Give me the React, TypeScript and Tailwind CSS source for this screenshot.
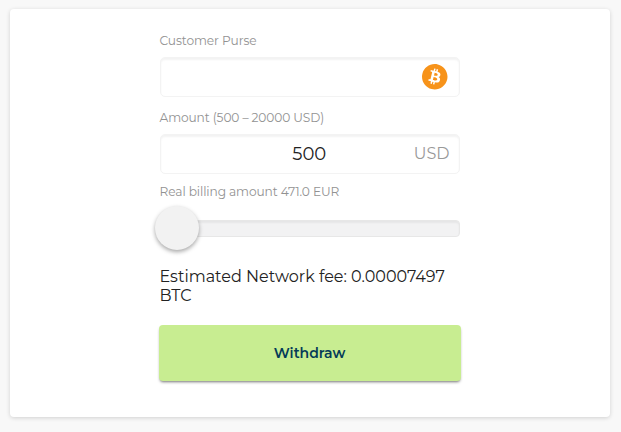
import { SiBitcoin } from "react-icons/si";

const label =
  "-ml-[0.5px] h-4 whitespace-nowrap text-[12.2px] leading-4 tracking-[-0.1px] text-[#929292]";
const field =
  "flex h-[40px] items-center rounded-[5px] border border-[#f3f3f3] bg-white shadow-[inset_0_2px_2px_rgba(0,0,0,0.05)]";

export default function App() {
  return (
    <main className="h-[432px] w-[621px] overflow-hidden bg-[#f8f8f8] px-[10px] pt-[9px] font-['Montserrat','Inter',sans-serif]">
      <section className="flex h-[408px] w-[600px] justify-center rounded-[4px] bg-white pt-[24px] shadow-[0_1px_4px_rgba(0,0,0,0.16)]">
        <form className="flex w-[300px] flex-col">
          <label className={label}>Customer Purse</label>
          <div className={`${field} mt-[8px] justify-end pr-[11.5px]`}>
            <SiBitcoin className="size-[25.5px] text-[#f7931a]" />
          </div>
          <label className={`${label} mt-[13px]`}>Amount (500 – 20000 USD)</label>
          <div className={`${field} mt-[8px] pr-[9.5px]`}>
            <span className="w-[55px]" />
            <span className="flex-1 text-center text-[18px] leading-6 text-[#222]">500</span>
            <span className="w-[47px] text-right text-[16px] leading-6 text-[#999]">USD</span>
          </div>
          <label className={`${label} mt-[10px]`}>Real billing amount 471.0 EUR</label>
          <div className="mt-[6px] flex h-[44px] items-center">
            <div className="flex h-[17px] w-full items-center rounded-[4px] border border-[#e7e7e7] bg-[#f2f2f3] shadow-[inset_0_2px_2px_rgba(0,0,0,0.05)]">
              <div className="-ml-[6.5px] size-[44px] shrink-0 rounded-full bg-[#f2f2f2] shadow-[0_2px_4px_rgba(0,0,0,0.35)]" />
            </div>
          </div>
          <p className="-ml-[0.5px] mt-[17px] text-[16px] leading-[19px] text-[#222]">
            <span className="whitespace-nowrap">Estimated Network fee: 0.00007497</span>
            <br />
            BTC
          </p>
          <button
            type="button"
            className="-mr-px mt-[20px] -ml-px h-[56px] rounded-[4px] bg-[#c8ed91] pr-px text-[14px] font-semibold text-[#043b58] shadow-[0_2px_3px_-1px_rgba(0,0,0,0.55)]"
          >
            Withdraw
          </button>
        </form>
      </section>
    </main>
  );
}
